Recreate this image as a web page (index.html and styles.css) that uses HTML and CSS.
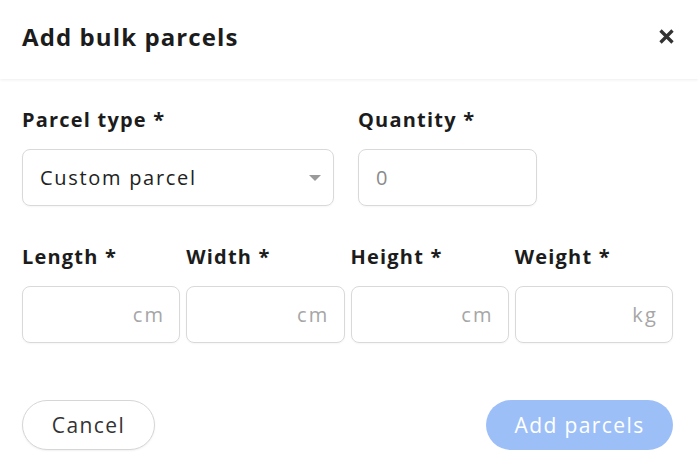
FILE: index.html
```html
<!DOCTYPE html>
<html lang="en">
<head>
<meta charset="utf-8">
<title>Add bulk parcels</title>
<link rel="stylesheet" href="styles.css">
</head>
<body>
<div class="modal">
  <header class="modal-header">
    <h1 class="modal-title">Add bulk parcels</h1>
    <button class="close-btn" aria-label="Close">
      <svg width="17" height="17" viewBox="0 0 17 17"><path d="M2.5 2.5 L14.5 14.5 M14.5 2.5 L2.5 14.5" stroke="#333" stroke-width="3.3" stroke-linecap="butt"/></svg>
    </button>
  </header>
  <div class="modal-body">
    <div class="row row-top">
      <div class="field">
        <label class="label">Parcel type *</label>
        <div class="input select">
          <span class="value">Custom parcel</span>
          <span class="caret"></span>
        </div>
      </div>
      <div class="field">
        <label class="label">Quantity *</label>
        <div class="input"><span class="placeholder">0</span></div>
      </div>
    </div>
    <div class="row row-dims">
      <div class="field">
        <label class="label">Length *</label>
        <div class="input unit-input"><span class="unit">cm</span></div>
      </div>
      <div class="field">
        <label class="label">Width *</label>
        <div class="input unit-input"><span class="unit">cm</span></div>
      </div>
      <div class="field">
        <label class="label">Height *</label>
        <div class="input unit-input"><span class="unit">cm</span></div>
      </div>
      <div class="field">
        <label class="label">Weight *</label>
        <div class="input unit-input"><span class="unit">kg</span></div>
      </div>
    </div>
    <div class="actions">
      <button class="btn btn-cancel">Cancel</button>
      <button class="btn btn-primary">Add parcels</button>
    </div>
  </div>
</div>
</body>
</html>
```
FILE: styles.css
```css
* { box-sizing: border-box; }
html, body { margin: 0; padding: 0; background: #fff; }
body {
  font-family: "Open Sans", "Liberation Sans", sans-serif;
  color: #1f1f1f;
  width: 698px;
  height: 474px;
  overflow: hidden;
}
.modal-header {
  height: 79px;
  padding: 0 23px 7px 22px;
  display: flex;
  align-items: center;
  justify-content: space-between;
  box-shadow: 0 1px 3px rgba(0, 0, 0, 0.07);
  position: relative;
}
.modal-title {
  margin: 0;
  font-size: 24px;
  font-weight: 700;
  letter-spacing: 1.1px;
  color: #1c1c1c;
}
.close-btn {
  border: 0;
  background: none;
  padding: 0;
  width: 17px;
  height: 17px;
  display: flex;
}
.modal-body {
  padding: 29px 25px 0 22px;
}
.row { display: grid; }
.row-top {
  grid-template-columns: 312px 179px;
  column-gap: 24px;
}
.row-dims {
  margin-top: 39px;
  grid-template-columns: repeat(4, 1fr);
  column-gap: 6px;
}
.label {
  display: block;
  height: 24px;
  line-height: 24px;
  font-size: 20px;
  font-weight: 700;
  letter-spacing: 1.2px;
  color: #1c1c1c;
  margin-bottom: 17px;
}
.input {
  height: 57px;
  border: 1px solid #d9d9d9;
  border-radius: 8px;
  display: flex;
  align-items: center;
  padding: 0 17px;
  font-size: 20px;
  letter-spacing: 1.7px;
  box-shadow: 0 1px 2px rgba(0, 0, 0, 0.04);
}
.select { justify-content: space-between; padding-right: 12px; }
.value { color: #222; }
.placeholder { color: #8a8a8a; }
.caret {
  width: 0;
  height: 0;
  border-left: 6px solid transparent;
  border-right: 6px solid transparent;
  border-top: 6px solid #9a9a9a;
}
.unit-input { justify-content: flex-end; padding-right: 14px; }
.unit { color: #a6a6a6; letter-spacing: 2.2px; }
.actions {
  margin-top: 57px;
  display: flex;
  justify-content: space-between;
}
.btn {
  height: 50px;
  border-radius: 25px;
  font-family: inherit;
  font-size: 21px;
  letter-spacing: 1.4px;
  padding: 0;
}
.btn-cancel {
  width: 133px;
  background: #fff;
  border: 1px solid #d6d6d6;
  color: #333;
  box-shadow: 0 1px 2px rgba(0, 0, 0, 0.06);
}
.btn-primary {
  width: 187px;
  background: #9dbff8;
  border: 0;
  color: #fff;
}
```
